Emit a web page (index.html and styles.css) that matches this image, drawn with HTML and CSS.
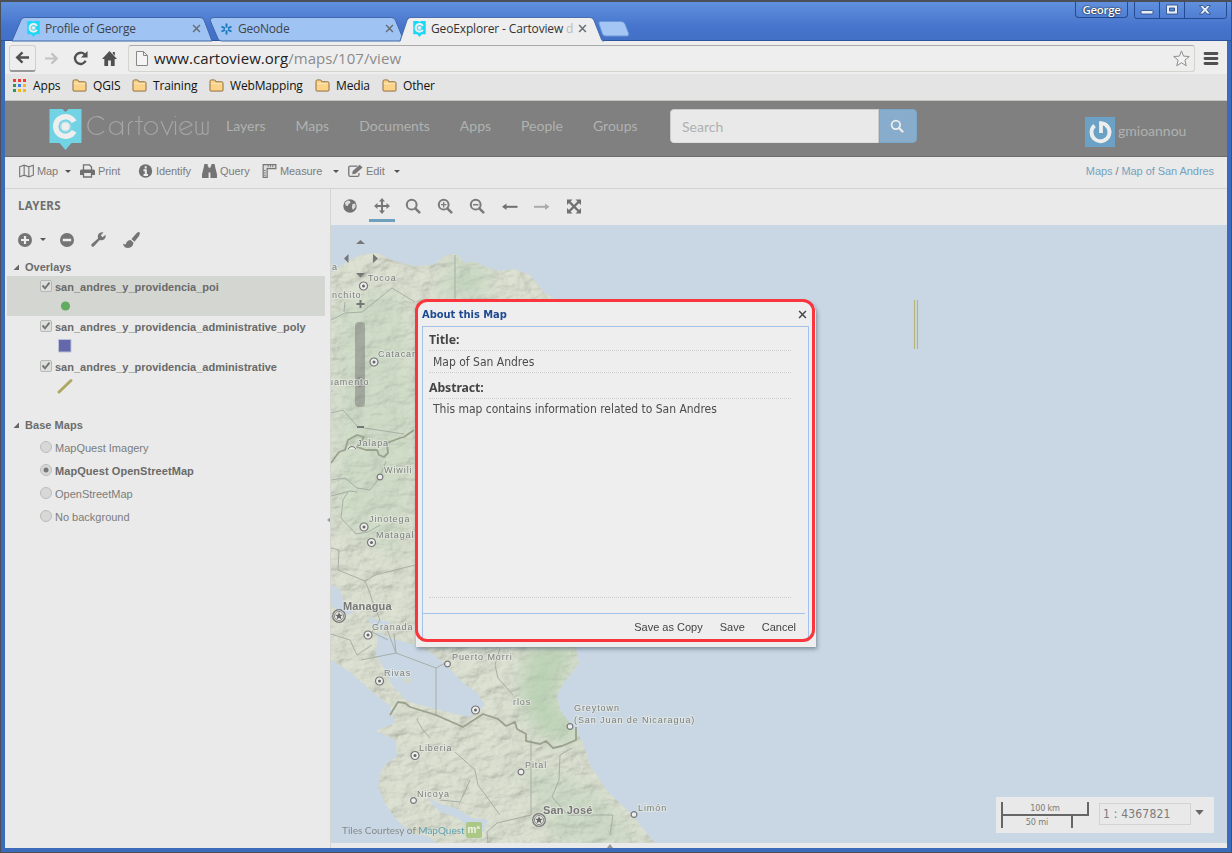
FILE: index.html
```html
<!DOCTYPE html>
<html lang="en">
<head>
<meta charset="utf-8">
<title>GeoExplorer - Cartoview</title>
<link rel="stylesheet" href="styles.css">
</head>
<body>
<svg class="defs" aria-hidden="true">
  <defs>
    <symbol id="pin" viewBox="0 0 32 41"><path d="M0 0H13L16 3 19 0H32V34H22L16 41 10 34H0Z" fill="currentColor"/><path d="M24.600 12.800A9.800 9.800 0 1 0 24.600 22.200" fill="none" stroke="#eee" stroke-width="5.400"/><circle cx="16" cy="17.500" r="4.800" fill="#eee" stroke="#a3dde8" stroke-width="1.500"/></symbol>
    <symbol id="close" viewBox="0 0 10 10"><path d="M1.2 1.2 8.8 8.8M8.8 1.2 1.2 8.8" fill="none" stroke="currentColor" stroke-width="1.600"/></symbol>
    <symbol id="folder" viewBox="0 0 16 14"><path d="M1 12V2.5Q1 1 2.500 1H5.500Q7 1 7.300 3H13.500Q15 3 15 4.500V12Q15 13 14 13H2Q1 13 1 12Z" fill="#fbd48a" stroke="#8a6634"/><path d="M2 5H14" stroke="#ffe9bd"/></symbol>
    <symbol id="search" viewBox="0 0 16 16"><circle cx="6.700" cy="6.700" r="4.900" fill="none" stroke="currentColor" stroke-width="2"/><path d="M10.300 10.300 14.300 14.300" stroke="currentColor" stroke-width="2.500" stroke-linecap="round"/></symbol>
    <symbol id="check" viewBox="0 0 12 12"><rect x=".5" y=".5" width="11" height="11" rx="1.500" fill="#dde0dc" stroke="#b5b8b5"/><path d="M2.500 5.500 5 8.300 9.500 2.700" fill="none" stroke="#757575" stroke-width="2"/></symbol>
    <symbol id="radio" viewBox="0 0 12 12"><circle cx="6" cy="6" r="5.500" fill="#d6d9d5" stroke="#bbb"/></symbol>
    <symbol id="town" viewBox="-5 -5 10 10"><circle r="4" fill="#eee" stroke="#777" stroke-width="1.200"/><circle r="1.500" fill="#666"/></symbol>
    <symbol id="village" viewBox="-5 -5 10 10"><circle r="2.900" fill="#eee" stroke="#777" stroke-width="1.200"/></symbol>
    <symbol id="capital" viewBox="-8 -8 16 16"><circle r="6.300" fill="#e6e6e2" stroke="#777" stroke-width="1.300"/><circle r="4.600" fill="none" stroke="#777" stroke-width=".8"/><path d="M0-4 1.100-1.300 4-1.200 1.700.6 2.500 3.400 0 1.800-2.500 3.400-1.700.6-4-1.200-1.100-1.300Z" fill="#666"/></symbol>
    <symbol id="node" viewBox="0 0 7 7"><path d="M6 .5V6H.5Z" fill="#666"/></symbol>
  </defs>
</svg>

<div class="window">
  <header class="tabstrip">
    <div class="tab tab-one">
      <svg class="tab-shape" viewBox="0 0 202 24" preserveAspectRatio="none"><path d="M0 24 9 3Q10 .5 13 .5H189Q192 .5 193 3L201 24Z" fill="#9fc3f3" stroke="#3d65a8"/></svg>
      <svg class="fav cyan"><use href="#pin"/></svg><span class="tab-title">Profile of George</span><svg class="tab-x"><use href="#close"/></svg>
    </div>
    <div class="tab tab-two">
      <svg class="tab-shape" viewBox="0 0 202 24" preserveAspectRatio="none"><path d="M0 3 8 21Q9 24 12 24H202L193 3Q192 .5 189 .5H4Q1 .5 0 3Z" fill="#9fc3f3" stroke="#3d65a8"/></svg>
      <svg class="fav" viewBox="0 0 13 13"><path d="M6.500 1V5M6.500 8V12M1.500 4 5 5.800M8 7.300 11.500 9M11.500 4 8 5.800M5 7.300 1.500 9" stroke="#1a78bd" stroke-width="1.900"/></svg><span class="tab-title">GeoNode</span><svg class="tab-x"><use href="#close"/></svg>
    </div>
    <div class="tab tab-three">
      <svg class="tab-shape" viewBox="0 0 202 25" preserveAspectRatio="none"><path d="M0 25 7 3Q8 .5 11 .5H188Q191 .5 192 3L199 21Q200 24 202 24V25Z" fill="#eee"/><path d="M0 24 7 3Q8 .5 11 .5H188Q191 .5 192 3L199 21Q200 24 202 24" fill="none" stroke="#4a6fae"/></svg>
      <svg class="fav cyan"><use href="#pin"/></svg><span class="tab-title">GeoExplorer - Cartoview <i>d</i></span><svg class="tab-x"><use href="#close"/></svg>
    </div>
    <svg class="newtab" viewBox="0 0 32 16"><path d="M1 3Q0 .5 3 .5H23Q26 .5 27 3L30.500 12Q31.500 15 29 15H8Q5 15 4.500 13Z" fill="#a3c6f4" stroke="#6c97d8"/></svg>
    <div class="win-user">George</div>
    <div class="win-buttons">
      <svg viewBox="0 0 93 17"><path d="M.5 0V14.500Q.5 16.500 3 16.500H90Q92.500 16.500 92.500 14.500V0M25.500 0V16M50.500 0V16" fill="none" stroke="#244b91"/><g stroke="#254580" stroke-width=".8" fill="#e8edf6"><rect x="7" y="8.500" width="12" height="3.500" rx="1"/><path fill-rule="evenodd" d="M32.500 3H43.500V12H32.500ZM35.500 6V9H40.500V6Z"/><path d="M65.500 3.500H69L71 6 73 3.500H76.500L73 7.700 76.500 12H73L71 9.500 69 12H65.500L69 7.700Z"/></g></svg>
    </div>
  </header>

  <div class="toolbar">
    <div class="backbtn"><svg viewBox="0 0 16 14"><path d="M15 7H2.500M8 1.500 2.300 7 8 12.500" fill="none" stroke="#505050" stroke-width="2.600"/></svg></div>
    <svg class="nav-icon fwd" viewBox="0 0 16 14"><path d="M1 7H13.500M8 1.500 13.700 7 8 12.500" fill="none" stroke="#c2c2c0" stroke-width="2.400"/></svg>
    <svg class="nav-icon" viewBox="0 0 16 16"><path d="M13.500 10.500A6 6 0 1 1 12.500 3.700" fill="none" stroke="#505050" stroke-width="2.500"/><path d="M15.500 0V7H8.500Z" fill="#505050"/></svg>
    <svg class="nav-icon home" viewBox="0 0 16 16"><path d="M8 0 16 8.500H13.500V16H9.500V10H6.500V16H2.500V8.500H0ZM11.500 1H13.700V5L11.500 3Z" fill="#505050"/></svg>
    <div class="address">
      <svg class="page" viewBox="0 0 12 15"><path d="M.5.5H7.500L11.500 4.500V14.500H.5ZM7.500.5V4.500H11.500" fill="#f4f4f4" stroke="#888"/></svg>
      <span class="url"><b>www.cartoview.org</b>/maps/107/view</span>
      <svg class="star" viewBox="0 0 18 18"><path d="M9 1 11.200 6.500 17.200 6.900 12.600 10.700 14 16.700 9 13.500 4 16.700 5.400 10.700.8 6.900 6.800 6.500Z" fill="#f2f2f2" stroke="#888"/></svg>
    </div>
    <svg class="menu" viewBox="0 0 14 13"><path d="M1 1.500H13M1 6.500H13M1 11.500H13" stroke="#505050" stroke-width="2.800" stroke-linecap="round"/></svg>
  </div>

  <nav class="bookmarks">
    <svg class="apps" viewBox="0 0 13 13"><path d="M0 1.500H3M5 1.500H8M10 1.500H13" stroke="#f03a34" stroke-width="3"/><path d="M0 6.500H3M0 11.500H3" stroke="#2a9b50" stroke-width="3"/><path d="M5 6.500H8" stroke="#3b7ded" stroke-width="3"/><path d="M10 6.500H13M5 11.500H8M10 11.500H13" stroke="#f4b51d" stroke-width="3"/></svg>
    <span class="bm bm-apps">Apps</span>
    <svg class="folder"><use href="#folder"/></svg><span class="bm bm-qgis">QGIS</span>
    <svg class="folder"><use href="#folder"/></svg><span class="bm bm-training">Training</span>
    <svg class="folder"><use href="#folder"/></svg><span class="bm bm-web">WebMapping</span>
    <svg class="folder"><use href="#folder"/></svg><span class="bm bm-media">Media</span>
    <svg class="folder"><use href="#folder"/></svg><span class="bm">Other</span>
  </nav>

  <div class="site-header">
    <svg class="logo"><use href="#pin"/></svg>
    <svg class="wordmark" viewBox="0 0 122 24"><g fill="none" stroke="#a6a6a6" stroke-width="1.200"><path d="M17 5A9 9 0 1 0 17 16M74 6 80 19.500 86 6M88.500 6V20M88.500 1V2M109 6V15Q109 19.500 112.500 19.500T115.500 15V7M115.500 15Q115.500 19.500 118.500 19.500T121 15V6M52 1V20M48 6.500H56M41.500 20V11Q41.500 6.500 46 6.500"/><circle cx="29" cy="13" r="6.500"/><path d="M35.500 6V20"/><circle cx="64" cy="13" r="6.500"/><path d="M105 16A6.500 6.500 0 1 1 105 10L94 15"/></g></svg>
    <div class="site-nav"><a>Layers</a><a>Maps</a><a>Documents</a><a>Apps</a><a>People</a><a>Groups</a></div>
    <div class="searchbox"><div class="search-input">Search</div><div class="search-go"><svg viewBox="0 0 15 15"><use href="#search"/></svg></div></div>
    <svg class="avatar" viewBox="0 0 30 30"><path d="M0 0H30V30H0Z" fill="#6aa1c4"/><path d="M9.500 8.500A9 9 0 1 0 16 6.200V16" fill="none" stroke="#eee" stroke-width="3.800"/></svg>
    <span class="username">gmioannou</span>
  </div>

  <div class="actions">
    <svg class="ic ic-map" viewBox="0 0 16 14"><path d="M.7 2.500 5.500.8 10.500 2.500 15.300.8V11.500L10.500 13.200 5.500 11.500.7 13.200ZM5.500.8V11.500M10.500 2.500V13.200" fill="none" stroke="#777" stroke-width="1.200"/></svg><span class="act-map">Map</span><i class="caret"></i>
    <svg class="ic ic-print" viewBox="0 0 15 14"><path d="M3.500 6V.8H9.500L11.500 3V6" fill="none" stroke="#707070" stroke-width="1.300"/><path d="M0 7Q0 5.500 1.500 5.500H13.500Q15 5.500 15 7V11H12V9H3V11H0Z" fill="#707070"/><path d="M3.500 9V13H11.500V9" fill="none" stroke="#707070" stroke-width="1.300"/></svg><span class="act-print">Print</span>
    <svg class="ic ic-info" viewBox="0 0 14 14"><circle cx="7" cy="7" r="6.700" fill="#707070"/><path d="M5 11H9.500M5 6.200H7.300V11M7.200 2.200V4.500" fill="none" stroke="#eee" stroke-width="2"/></svg><span class="act-identify">Identify</span>
    <svg class="ic ic-query" viewBox="0 0 16 15"><path d="M2.500 0H6V2L7 3V15H0V11L2 3ZM9 3 10 2V0H13.500L14 3 16 11V15H9ZM6.500 4H9.500V9H6.500Z" fill="#747474"/></svg><span class="act-query">Query</span>
    <svg class="ic ic-ruler" viewBox="0 0 15 15"><path d="M.7.700H14.300V5H5V14.300H.7Z" fill="#ddd" stroke="#777" stroke-width="1.300"/><path d="M6 1V3.500M8.500 1V3.500M11 1V3.500M1 7H3.500M1 9.500H3.500M1 12H3.500" stroke="#777"/></svg><span class="act-measure">Measure</span><i class="caret"></i>
    <svg class="ic ic-edit" viewBox="0 0 16 14"><path d="M10 1.700H2.500Q.8 1.700.8 3.400V11Q.8 12.700 2.500 12.700H10Q11.700 12.700 11.700 11V9" fill="none" stroke="#777" stroke-width="1.400"/><path d="M5 7 12.500.300 15.500 3.300 8 10 4.500 10.500Z" fill="#777"/></svg><span class="act-edit">Edit</span><i class="caret"></i>
    <div class="crumbs"><a>Maps</a> / <a>Map of San Andres</a></div>
  </div>

  <main class="main">
    <aside class="sidebar">
      <h2>LAYERS</h2>
      <div class="layer-tools">
        <svg viewBox="0 0 14 14"><circle cx="7" cy="7" r="7"/><path d="M7 3V11M3 7H11" stroke="#eee" stroke-width="2.200"/></svg>
        <i class="caret"></i>
        <svg class="lt-minus" viewBox="0 0 14 14"><circle cx="7" cy="7" r="7"/><path d="M2.800 7H11.200" stroke="#eee" stroke-width="2.500"/></svg>
        <svg class="lt-wrench" viewBox="0 0 15 15"><path d="M.7 12 7 6.500Q6 2.500 9 .800 11-.3 12.500.5L9.800 3.200 11.500 5.200 14.500 2.800Q15.300 5 13.500 7 11.500 9 8.700 8L3 14.200Q1.800 15.200.7 14.200T.7 12Z"/></svg>
        <svg class="lt-brush" viewBox="0 0 17 16"><path d="M16.500.2Q17.500 1 16 4L11.500 9.700 8.500 7 13.500 1.200Q15.500-.4 16.500.2ZM7.700 8 10.500 10.700Q10 15.500 5 16 .8 16 0 11.500L2 12.500Q3 12.500 3.700 10 5 8 7.700 8Z"/></svg>
      </div>
      <div class="folder-row"><svg><use href="#node"/></svg>Overlays</div>
      <div class="layer selected"><div class="layer-name"><svg><use href="#check"/></svg>san_andres_y_providencia_poi</div><svg class="legend" viewBox="0 0 16 16"><circle cx="8.500" cy="7" r="4.600" fill="#62ac62"/></svg></div>
      <div class="layer"><div class="layer-name"><svg><use href="#check"/></svg>san_andres_y_providencia_administrative_poly</div><svg class="legend" viewBox="0 0 16 16"><path d="M1.500.5H14V13H1.500Z" fill="#6467aa" stroke="#b8c3da"/></svg></div>
      <div class="layer"><div class="layer-name"><svg><use href="#check"/></svg>san_andres_y_providencia_administrative</div><svg class="legend" viewBox="0 0 16 16"><path d="M2 13 14 1.500" stroke="#aea863" stroke-width="3" stroke-linecap="round"/></svg></div>
      <div class="folder-row base-row"><svg><use href="#node"/></svg>Base Maps</div>
      <div class="base"><svg><use href="#radio"/></svg>MapQuest Imagery</div>
      <div class="base current"><svg viewBox="0 0 12 12"><circle cx="6" cy="6" r="5.500" fill="#d6d9d5" stroke="#bbb"/><circle cx="6" cy="6" r="2.500" fill="#777"/></svg>MapQuest OpenStreetMap</div>
      <div class="base"><svg><use href="#radio"/></svg>OpenStreetMap</div>
      <div class="base"><svg><use href="#radio"/></svg>No background</div>
      <svg class="collapse" viewBox="0 0 4 6"><path d="M4 0V6L0 3Z" fill="#999"/></svg>
    </aside>

    <section class="map-panel">
      <div class="map-tools">
        <div><svg viewBox="0 0 16 16"><circle cx="8" cy="8" r="6.700" fill="#727272"/><path d="M3 4.500 5.500 2.500 8 3 8.500 5 6.500 6 6 8 3.500 7.500ZM10.500 6 13.300 5.500 13.500 9 11 12 9.800 9.500Z" fill="#dcdcdc"/></svg></div>
        <div class="active"><svg viewBox="0 0 16 16"><path d="M8 2V14M2 8H14" stroke="#777" stroke-width="2"/><path d="M8 0 11 3.500H5ZM8 16 5 12.500H11ZM0 8 3.500 5V11ZM16 8 12.500 11V5Z" fill="#777"/></svg></div>
        <div><svg><use href="#search"/></svg></div>
        <div><svg viewBox="0 0 16 16"><use href="#search"/><path d="M6.700 4V9.400M4 6.700H9.400" stroke="currentColor" stroke-width="1.300"/></svg></div>
        <div><svg viewBox="0 0 16 16"><use href="#search"/><path d="M4 6.700H9.400" stroke="currentColor" stroke-width="1.500"/></svg></div>
        <div class="wide"><svg viewBox="0 0 16 16"><path d="M2 8.800H15.500" stroke="#707070" stroke-width="2"/><path d="M0 8.800 4.500 5.500V12.100Z" fill="#707070"/></svg></div>
        <div class="wide"><svg viewBox="0 0 16 16"><path d="M0 8.800H13" stroke="#aaa" stroke-width="2"/><path d="M15.500 8.800 11 5.500V12.100Z" fill="#aaa"/></svg></div>
        <div class="wide"><svg viewBox="0 0 16 16"><path d="M3 3.500 13 13.500M13 3.500 3 13.500" stroke="#707070" stroke-width="2.400"/><path d="M1 1.500H6.500L1 7ZM15 1.500V7L9.500 1.500ZM1 15.500V10L6.500 15.500ZM15 15.500H9.500L15 10Z" fill="#707070"/></svg></div>
      </div>

      <div class="map">
        <svg class="map-canvas" viewBox="331 225 896 618">
          <defs>
            <filter id="relief" x="0" y="0" width="100%" height="100%">
              <feTurbulence type="fractalNoise" baseFrequency=".045 .075" numOctaves="5" seed="8" result="n"/>
              <feDiffuseLighting in="n" surfaceScale="4" diffuseConstant="1.120" lighting-color="#dde1d2" result="l"><feDistantLight azimuth="215" elevation="60"/></feDiffuseLighting>
              <feComposite in="l" in2="SourceGraphic" operator="in"/>
            </filter>
            <filter id="soft"><feGaussianBlur stdDeviation="9"/></filter>
            <clipPath id="landclip"><path id="landpath" d="M331 273 345 263 360 255 377 253 395 261 415 266 433 265 446 255 456 254 465 263 473 261 486 267 500 271 514 269 530 275 545 293 556 300 580 380 590 500 577 620 576 648 579 664 565 681 557 695 560 710 573 727 583 742 590 765 608 792 632 815 655 843 436 843 428 836 414 834 397 820 385 804 378 786 382 768 397 756 396 740 376 731 395 723 390 706 370 690 350 672 331 660Z"/></clipPath>
          </defs>
          <path fill="#c9d7e5" d="M331 225H1227V843H331Z"/>
          <use href="#landpath" fill="#d3d9ca"/>
          <g clip-path="url(#landclip)">
            <path fill="#d3d9cc" d="M331 240H660V843H331Z" filter="url(#relief)" opacity=".5"/>
            <g filter="url(#soft)" fill="#b2cfae"><path opacity=".75" d="M530 645H576L560 680 555 705 577 725 575 742 540 735 520 700Z"/><path opacity=".5" d="M455 260 490 270 480 295 440 298Z"/><path opacity=".3" d="M340 300 400 290 415 420 400 560 340 520Z"/><path opacity=".35" d="M520 760 590 790 640 843H560Z"/></g>
          </g>
          <g fill="#c9d7e5">
            <path d="M378 632 390 638 416 645 434 655 447 666 462 682 476 692 485 705 470 717 452 713 425 706 407 701 392 685 385 670 376 655Z"/>
            <path d="M331 584 340 590 344 602 354 612 343 617 331 604ZM368 618 390 622 386 630 372 626Z"/>
            <path d="M427 797 440 804 455 808 472 818 488 820 483 832 469 827 456 817 440 812Z"/>
          </g>
          <path d="M403 679 410 677 412 682 407 684Z" fill="#d2d9cb"/>
          <g fill="none" stroke="#a3a9a2" stroke-width=".9">
            <path d="M455 255V300M331 320 345 313 362 312 392 288 415 302M344 312 345 302M331 413 343 410 358 427 404 434M331 480 345 478 357 488 370 490 380 477 386 461M331 496 350 491 357 492M348 492 343 500 341 518 356 534 368 532 380 525M331 548 339 550 338 570 365 581 375 575 415 565M365 581 370 593 372 600M372 600 380 620 372 632 388 640M331 634 350 640 357 655 372 645"/>
            <path d="M385 624 396 653 361 660M394 633 396 653 436 668 447 662M436 668V716M430 738 423 730 417 720 418 718M500 648 495 665 498 678 513 695M531 739V815L497 823 487 832 488 843M455 752 475 770 478 785 500 815M470 780 460 802 440 800M572 748 560 755 559 780 552 797M552 797 568 815H613L610 835"/>
          </g>
          <g fill="none" stroke="#9aa18c" stroke-width="1.800" stroke-linejoin="round">
            <path d="M331 463 339 452 345 450 348 440 357 435 364 437 357 447 366 450 377 450 379 455 384 457 388 453 387 443 400 438 404 437 414 430"/>
            <path d="M390 715 398 702 405 703 410 707 436 715 463 727 483 714 498 719 506 726 515 722 517 729 526 734 526 741 540 744 546 741 553 748 562 746 576 740V727"/>
          </g>
          <path d="M914.500 300V349M917.500 300V349" stroke="#b8b27b" stroke-width="1.200"/>
          <g class="pan" fill="#777"><path d="M356 244H365L360.500 240ZM348.500 254V263L344 258.500ZM373 254 378 258.500 373 263ZM356 273H365L360.500 277.500Z"/><path d="M360.500 300V308M356.500 304H364.500M357 427H364" stroke="#777" stroke-width="2"/><rect x="355" y="322" width="10" height="85" rx="4" opacity=".5"/><circle cx="360" cy="382" r="5" opacity=".5"/></g>
          <g><use href="#town" x="358.500" y="281" width="10" height="10"/><use href="#town" x="369" y="357" width="10" height="10"/><use href="#town" x="359" y="522" width="10" height="10"/><use href="#town" x="366.500" y="537.500" width="10" height="10"/><use href="#town" x="363" y="630" width="10" height="10"/><use href="#town" x="374.500" y="676" width="10" height="10"/><use href="#town" x="470.500" y="705" width="10" height="10"/><use href="#town" x="410" y="750.500" width="10" height="10"/>
          <use href="#village" x="375" y="472" width="10" height="10"/><use href="#village" x="442.500" y="659" width="10" height="10"/><use href="#village" x="565" y="721.500" width="10" height="10"/><use href="#village" x="516" y="767" width="10" height="10"/><use href="#village" x="408.500" y="795.500" width="10" height="10"/><use href="#village" x="629" y="809.500" width="10" height="10"/>
          <use href="#capital" x="331" y="608" width="16" height="16"/><use href="#capital" x="531" y="812" width="16" height="16"/></g>
          <path d="M348 449Q352 444 356 449" fill="#eee" stroke="#777"/>
          <g class="place">
            <text x="368" y="281">Tocoa</text><text x="332" y="270">a</text><text x="332" y="298">nchito</text><text x="378" y="357">Catacamas</text><text x="328" y="385">uamento</text><text x="357" y="446">Jalapa</text><text x="384" y="473">Wiwili</text><text x="369" y="522">Jinotega</text><text x="376" y="538">Matagalpa</text><text x="372" y="630">Granada</text><text x="452" y="660">Puerto Morri</text><text x="384" y="676">Rivas</text><text x="513" y="705">rlos</text><text x="574" y="711">Greytown</text><text x="574" y="723">(San Juan de Nicaragua)</text><text x="419" y="751">Liberia</text><text x="525" y="768">Pital</text><text x="417" y="797">Nicoya</text><text x="638" y="811">Limón</text>
          </g>
          <g class="place-big"><text x="343" y="610">Managua</text><text x="543" y="814">San José</text></g>
        </svg>

        <div class="attribution">Tiles Courtesy of <a>MapQuest</a><span class="mq">m<sup>a</sup></span></div>

        <div class="scale-panel">
          <div class="scale-bar"><div class="km">100 km</div><div class="mi">50 mi</div></div>
          <div class="scale-value">1 : 4367821</div>
          <svg class="scale-arrow" viewBox="0 0 10 6"><path d="M0 0H10L5 6Z" fill="#666"/></svg>
        </div>

        <div class="dialog">
          <div class="dialog-head"><span>About this Map</span><svg><use href="#close"/></svg></div>
          <div class="dialog-body">
            <div class="fields">
              <div class="field-label">Title:</div>
              <div class="field-value">Map of San Andres</div>
              <div class="field-label second">Abstract:</div>
              <div class="field-value abstract">This map contains information related to San Andres</div>
            </div>
            <div class="dialog-foot"><span>Save as Copy</span><span>Save</span><span>Cancel</span></div>
          </div>
          <div class="dialog-ring"></div>
        </div>
      </div>
      <div class="south"><svg viewBox="0 0 6 4"><path d="M0 4H6L3 0Z" fill="#999"/></svg></div>
    </section>
  </main>
</div>
</body>
</html>
```
FILE: styles.css
```css
* { box-sizing: border-box; }
body { margin: 0; width: 1232px; height: 853px; overflow: hidden; font: 11px "Liberation Sans", Arial, sans-serif; color: #7c7c7c; }
svg { display: block; flex: none; overflow: visible; }
span, a { white-space: nowrap; }
.defs { position: absolute; width: 0; height: 0; }

.window { display: flex; flex-direction: column; width: 1232px; height: 853px; padding: 0 4px 3px; background: #3d6bbb; border: 1px solid #4b5058; border-width: 2px 1px 1px; }

/* browser chrome */
.tabstrip { display: flex; height: 39px; margin: 0 -4px; padding: 15px 0 0 11px; background: linear-gradient(#6190dd, #4674cc 65%, #4270c6); border-bottom: 1px solid #2d559f; font: 12px "Open Sans", "Noto Sans", sans-serif; color: #3f444b; position: relative; flex: none; }
.tab { position: relative; display: flex; align-items: center; height: 24px; padding-bottom: 1px; }
.tab > * { position: relative; }
.tab > .tab-shape { position: absolute; inset: 0; width: 100%; height: 100%; }
.tab-one { width: 201px; padding-left: 15px; }
.tab-two { width: 194px; margin-left: -3px; padding-left: 10px; }
.tab-three { width: 204px; height: 25px; margin-left: -4px; padding-left: 13px; padding-bottom: 2px; z-index: 1; color: #333; }
.fav { width: 13px; height: 16px; margin-right: 5px; }
.tab .fav { color: #1bd8f5; }
.tab-title { width: 146px; letter-spacing: -.22px; }
.tab-two .tab-title { width: 140px; }
.tab-three .tab-title { width: 140px; letter-spacing: -.15px; }
.tab-title i { font-style: normal; color: #bbb; }
.tab-x { width: 9px; height: 9px; color: #666c75; margin-left: auto; margin-right: 12px; }
.tab-two .tab-x { margin-right: 10px; }
.tab-three .tab-x { margin-right: 17px; }
.newtab { width: 32px; height: 16px; margin: 4px 0 0 -6px; }
.win-user { position: absolute; right: 103px; top: 0; width: 53px; height: 16px; border: 1px solid #244b91; border-top: 0; border-radius: 0 0 4px 4px; text-align: center; line-height: 15px; font-size: 11.500px; font-weight: 600; letter-spacing: -.3px; color: #fff; text-shadow: 0 0 2px #123, 0 0 1px #123; }
.win-buttons { position: absolute; right: 4px; top: 0; width: 93px; height: 17px; }

.toolbar { display: flex; align-items: center; height: 33px; background: #eee; padding: 1px 9px 0 4px; flex: none; }
.backbtn { width: 27px; height: 27px; display: flex; align-items: center; justify-content: center; border: 1px solid #d0d0ca; border-bottom: 2px solid #999; border-radius: 3px; }
.backbtn svg { width: 15px; height: 13px; }
.nav-icon { width: 15px; height: 15px; margin-left: 14px; }
.nav-icon.fwd { margin-left: 8px; height: 13px; }
.address { display: flex; align-items: center; flex: 1; height: 27px; margin-left: 11px; border: 1px solid #d2d4ce; border-top-color: #aaa; border-radius: 3px; padding: 0 4px 0 7px; }
.page { width: 12px; height: 15px; }
.url { margin-left: 6px; font: 15px "Open Sans", "Noto Sans", sans-serif; color: #8b8b8b; flex: 1; letter-spacing: .05px; }
.url b { font-weight: 400; color: #222; }
.star { width: 17px; height: 17px; }
.menu { width: 14px; height: 13px; margin-left: 9px; }

.bookmarks { display: flex; align-items: center; height: 27px; padding: 0 0 3px 8px; background: #e3e4e3; border-bottom: 1px solid #c5c5c0; font: 12px "Open Sans", "Noto Sans", sans-serif; color: #111; flex: none; }
.apps { width: 13px; height: 13px; }
.folder { width: 15px; height: 13px; margin-right: 6px; }
.bm { letter-spacing: -.15px; }
.bm-apps { width: 39px; margin-left: 7px; }
.bm-qgis { width: 39px; }
.bm-training { width: 56px; }
.bm-web { width: 85px; }
.bm-media { width: 46px; }

/* site header */
.site-header { display: flex; align-items: center; height: 56px; background: #808080; border-bottom: 1px solid #6c6c6c; padding-left: 44px; font: 14px Lato, sans-serif; color: #b0b2b0; flex: none; }
.logo { width: 33px; height: 41px; margin-top: 1px; color: #72d3e5; }
.wordmark { width: 122px; height: 24px; margin: -4px 0 0 5px; }
.site-nav { display: flex; gap: 30px; margin: -6px 0 0 17px; width: 444px; flex: none; }
.searchbox { display: flex; width: 247px; height: 34px; margin-top: -6px; border-radius: 4px; overflow: hidden; }
.search-input { width: 209px; padding: 0 12px 0 11px; line-height: 33px; background: #e9e9e9; border: 1px solid #ccc; border-bottom-color: #ddd; border-radius: 4px 0 0 4px; color: #adb1ae; }
.search-go { width: 38px; display: flex; align-items: center; justify-content: center; background: #88adcc; border: 1px solid #7aa6c8; border-radius: 0 4px 4px 0; color: #eee; }
.search-go svg { width: 14px; height: 14px; margin-right: 2px; }
.avatar { width: 30px; height: 30px; margin: 6px 3px 0 168px; }
.username { margin-top: 4px; }

.actions { display: flex; align-items: center; height: 32px; background: #eaeaea; border-bottom: 1px solid #d2d3cf; padding: 0 13px 3px 14px; letter-spacing: -.08px; flex: none; }
.ic { width: 15px; height: 14px; margin-right: 3px; }
.caret { width: 0; height: 0; border: 3px solid transparent; border-top-color: #555; border-bottom: 0; flex: none; }
.act-map { width: 28px; }
.ic-print { margin-left: 9px; }
.act-print { width: 40px; }
.act-identify { width: 46px; }
.act-query { width: 42px; }
.act-measure { width: 53px; }
.ic-edit { margin-left: 9px; }
.act-edit { width: 28px; }
.crumbs { margin-left: auto; letter-spacing: -.06px; }
.crumbs a { color: #75a2be; }

/* layer tree */
.main { display: flex; height: 659px; background: #e9eae9; flex: none; }
.sidebar { position: relative; width: 326px; padding: 9px 5px 0 2px; border-right: 1px solid #d4d5d1; flex: none; }
.sidebar h2 { margin: 0 0 0 11px; height: 15px; font: bold 11.500px/15px "Noto Sans", sans-serif; letter-spacing: .25px; color: #707070; }
.layer-tools { display: flex; align-items: center; height: 33px; margin: 10px 0 0 11px; fill: #757575; }
.layer-tools svg { width: 14px; height: 14px; }
.layer-tools .caret { margin-left: 8px; }
.layer-tools .lt-minus { margin-left: 14px; }
.layer-tools .lt-wrench { width: 15px; height: 15px; margin-left: 17px; }
.layer-tools .lt-brush { width: 17px; height: 16px; margin-left: 17px; }
.folder-row { display: flex; align-items: center; height: 19px; margin-top: 1px; padding: 1px 0 0 6px; font-weight: bold; color: #6c6c6c; }
.folder-row svg { width: 7px; height: 7px; margin-right: 5px; }
.layer { height: 40px; font-weight: bold; color: #6a6a6a; }
.layer-name { display: flex; align-items: center; height: 22px; padding-left: 33px; white-space: nowrap; }
.layer-name svg { width: 12px; height: 12px; margin: -2px 3px 0 0; }
.selected { background: #d4d6d1; }
.legend { width: 16px; height: 16px; margin-left: 50px; margin-top: 1px; }
.base-row { margin: 19px 0 2px; letter-spacing: .05px; }
.base { display: flex; align-items: center; height: 23px; padding-left: 33px; }
.base svg { width: 12px; height: 12px; margin: -2px 3px 0 0; }
.current { font-weight: bold; color: #6a6a6a; letter-spacing: .06px; }
.collapse { position: absolute; right: 0; top: 328px; width: 3px; height: 6px; }

/* map */
.map-panel { flex: 1; display: flex; flex-direction: column; }
.map-tools { display: flex; height: 36px; padding-left: 3px; color: #7a7a7a; flex: none; }
.map-tools div { width: 32px; height: 33px; padding: 9px 9px 0 7px; }
.map-tools svg { width: 16px; height: 16px; }
.map-tools .wide { padding-left: 8px; padding-right: 8px; }
.map-tools div:first-child { padding-left: 8px; padding-right: 8px; }
.map-tools .active { width: 26px; margin: 0 3px; padding: 9px 5px 0; border-bottom: 3px solid #6fa0be; }
.map { position: relative; height: 618px; flex: none; }
.map-canvas { width: 896px; height: 618px; overflow: hidden; }
.place { font: 9px "Liberation Sans", Arial, sans-serif; fill: #7a807c; letter-spacing: .92px; paint-order: stroke; stroke: rgba(232, 234, 228, .65); stroke-width: 2px; }
.place-big { font: bold 11px "Liberation Sans", Arial, sans-serif; fill: #777; letter-spacing: .15px; paint-order: stroke; stroke: rgba(232, 234, 228, .7); stroke-width: 2px; }
.attribution { position: absolute; left: 11px; top: 597px; display: flex; align-items: center; height: 16px; white-space: pre; font: 10px Lato, sans-serif; color: #858b87; }
.attribution a { color: #5fa2b5; }
.mq { width: 16px; height: 16px; margin-left: 1px; background: #abc985; border-radius: 2px; color: #f3f3ee; font: bold 10px/16px "Liberation Sans", sans-serif; text-align: center; }
.mq sup { font-size: 6px; line-height: 0; }
.scale-panel { position: absolute; left: 665px; top: 572px; width: 218px; height: 36px; display: flex; background: #e8e9e8; padding: 5px; font-family: "DejaVu Sans Condensed", "DejaVu Sans", sans-serif; font-stretch: condensed; }
.scale-bar { width: 88px; font-size: 9px; line-height: 12px; text-align: center; letter-spacing: -.15px; margin-top: 0; }
.km { height: 14px; border: 2px solid #666; border-top: 0; }
.mi { width: 72px; height: 12px; border: 2px solid #666; border-width: 0 2px; }
.scale-value { width: 92px; height: 22px; margin-left: 10px; margin-top: 1px; border: 1px solid #d2d4cf; font-size: 12px; line-height: 20px; padding-left: 3px; letter-spacing: .2px; }
.scale-arrow { width: 9px; height: 5px; margin: 8px 0 0 4px; }

/* dialog floats over the map */
.dialog { position: absolute; left: 85px; top: 76px; width: 400px; height: 346px; background: #eee; box-shadow: 1px 2px 4px rgba(70, 85, 100, .6); padding: 0 7px 0 6px; font-family: "DejaVu Sans Condensed", "DejaVu Sans", sans-serif; font-stretch: condensed; color: #4c4c4c; border-radius: 12px 12px 0 0; }
.dialog-head { display: flex; align-items: center; justify-content: space-between; height: 25px; padding: 2px 2px 0 0; font-weight: bold; font-size: 11px; color: #1e4a91; }
.dialog-head svg { width: 9px; height: 9px; color: #444; }
.dialog-body { height: 315px; border: 1px solid #a3c2eb; border-bottom: 0; }
.fields { height: 287px; padding: 2px 14px 0 6px; margin-right: 3px; border-bottom: 1px solid #a3c2eb; font-size: 12px; }
.field-label { height: 22px; font: bold 12.300px/22px "Noto Sans", sans-serif; color: #444; border-bottom: 1px dotted #ccc; }
.field-value { height: 22px; line-height: 23px; padding-left: 4px; border-bottom: 1px dotted #ccc; white-space: nowrap; }
.second { margin-top: 4px; letter-spacing: -.1px; }
.abstract { height: 199px; line-height: 21px; letter-spacing: -.02px; }
.dialog-foot { display: flex; justify-content: flex-end; gap: 17px; padding: 7px 12px 0 0; font: 11px "Liberation Sans", Arial, sans-serif; color: #444; }
.dialog-ring { position: absolute; left: -1px; top: -2px; width: 400px; height: 343px; border: 3px solid #f9363d; border-radius: 12px; }
.south { height: 5px; padding: 1px 0 0 276px; }
.south svg { width: 6px; height: 4px; }
```
